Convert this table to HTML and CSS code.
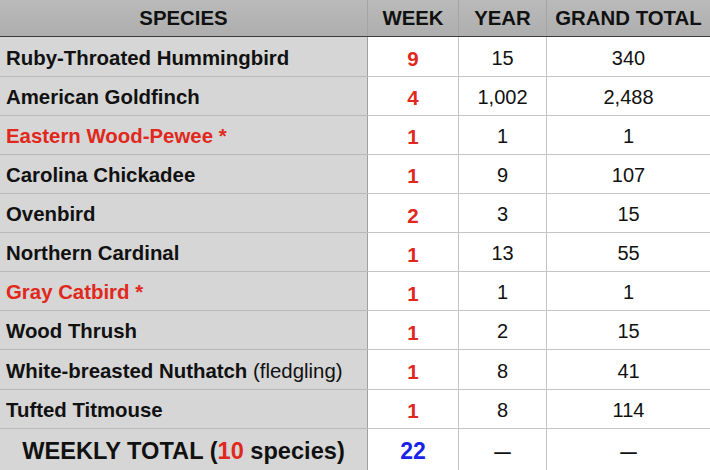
FILE: index.html
```html
<!DOCTYPE html>
<html>
<head>
<meta charset="utf-8">
<link rel="stylesheet" href="styles.css">
</head>
<body>
<div class="tally">
  <div class="row head">
    <div class="cell">SPECIES</div><div class="cell">WEEK</div><div class="cell">YEAR</div><div class="cell">GRAND TOTAL</div>
  </div>
  <div class="row"><div class="cell sp">Ruby-Throated Hummingbird</div><div class="cell wk">9</div><div class="cell num">15</div><div class="cell num">340</div></div>
  <div class="row"><div class="cell sp">American Goldfinch</div><div class="cell wk">4</div><div class="cell num">1,002</div><div class="cell num">2,488</div></div>
  <div class="row"><div class="cell sp new">Eastern Wood-Pewee *</div><div class="cell wk">1</div><div class="cell num">1</div><div class="cell num">1</div></div>
  <div class="row"><div class="cell sp">Carolina Chickadee</div><div class="cell wk">1</div><div class="cell num">9</div><div class="cell num">107</div></div>
  <div class="row"><div class="cell sp">Ovenbird</div><div class="cell wk">2</div><div class="cell num">3</div><div class="cell num">15</div></div>
  <div class="row"><div class="cell sp">Northern Cardinal</div><div class="cell wk">1</div><div class="cell num">13</div><div class="cell num">55</div></div>
  <div class="row"><div class="cell sp new">Gray Catbird *</div><div class="cell wk">1</div><div class="cell num">1</div><div class="cell num">1</div></div>
  <div class="row"><div class="cell sp">Wood Thrush</div><div class="cell wk">1</div><div class="cell num">2</div><div class="cell num">15</div></div>
  <div class="row"><div class="cell sp"><span>White-breasted Nuthatch <span class="note">(fledgling)</span></span></div><div class="cell wk">1</div><div class="cell num">8</div><div class="cell num">41</div></div>
  <div class="row"><div class="cell sp">Tufted Titmouse</div><div class="cell wk">1</div><div class="cell num">8</div><div class="cell num">114</div></div>
  <div class="row foot">
    <div class="cell total-label"><span>WEEKLY TOTAL (<span class="red">10</span> species)</span></div>
    <div class="cell total-week">22</div>
    <div class="cell num dash">—</div>
    <div class="cell num dash">—</div>
  </div>
</div>
</body>
</html>
```

FILE: styles.css
```css
html, body {
  margin: 0;
  padding: 0;
  background: #ffffff;
}

.tally {
  width: 710px;
  height: 470px;
  overflow: hidden;
  font-family: "Liberation Sans", Arial, sans-serif;
  color: #111;
  display: flex;
  flex-direction: column;
}

.row {
  display: grid;
  grid-template-columns: 367px 91px 88px 164px;
  height: 39.2px;
  box-sizing: border-box;
  border-bottom: 1px solid #c4c4c4;
}

.cell {
  display: flex;
  align-items: center;
  justify-content: center;
  box-sizing: border-box;
  border-left: 1px solid #c4c4c4;
  white-space: nowrap;
  padding-top: 3px;
}

.cell:first-child {
  border-left: none;
}

.row.head {
  height: 37.5px;
  background: linear-gradient(#bababa, #aeaeae);
  border-bottom: 1.5px solid #3c3c3c;
}

.row.head .cell {
  border-left-color: #a4a4a4;
  font-size: 20.4px;
  font-weight: bold;
  padding-top: 0;
}

.cell.sp {
  justify-content: flex-start;
  background: #d6d6d6;
  padding-left: 6px;
  font-size: 20.4px;
  font-weight: bold;
  box-shadow: 0 1px 0 #b9b9b9;
}

.cell.sp.new {
  color: #e0281d;
}

.note {
  font-weight: normal;
}

.cell.wk {
  border-left: 1.5px solid #a0a0a0;
  color: #e0281d;
  font-weight: bold;
  font-size: 20.5px;
  padding-top: 5px;
}

.cell.num {
  font-size: 20px;
  color: #111;
}

.row.foot {
  height: 41.3px;
  border-bottom: none;
}

.cell.total-label {
  background: #d6d6d6;
  font-size: 23.6px;
  font-weight: bold;
  padding-top: 4px;
}

.red {
  color: #e0281d;
}

.cell.total-week {
  border-left: 1.5px solid #a0a0a0;
  font-size: 23px;
  font-weight: bold;
  color: #1a24e8;
  padding-top: 4px;
}

.cell.dash {
  font-size: 16.5px;
  font-weight: bold;
  padding-top: 6px;
}
```
